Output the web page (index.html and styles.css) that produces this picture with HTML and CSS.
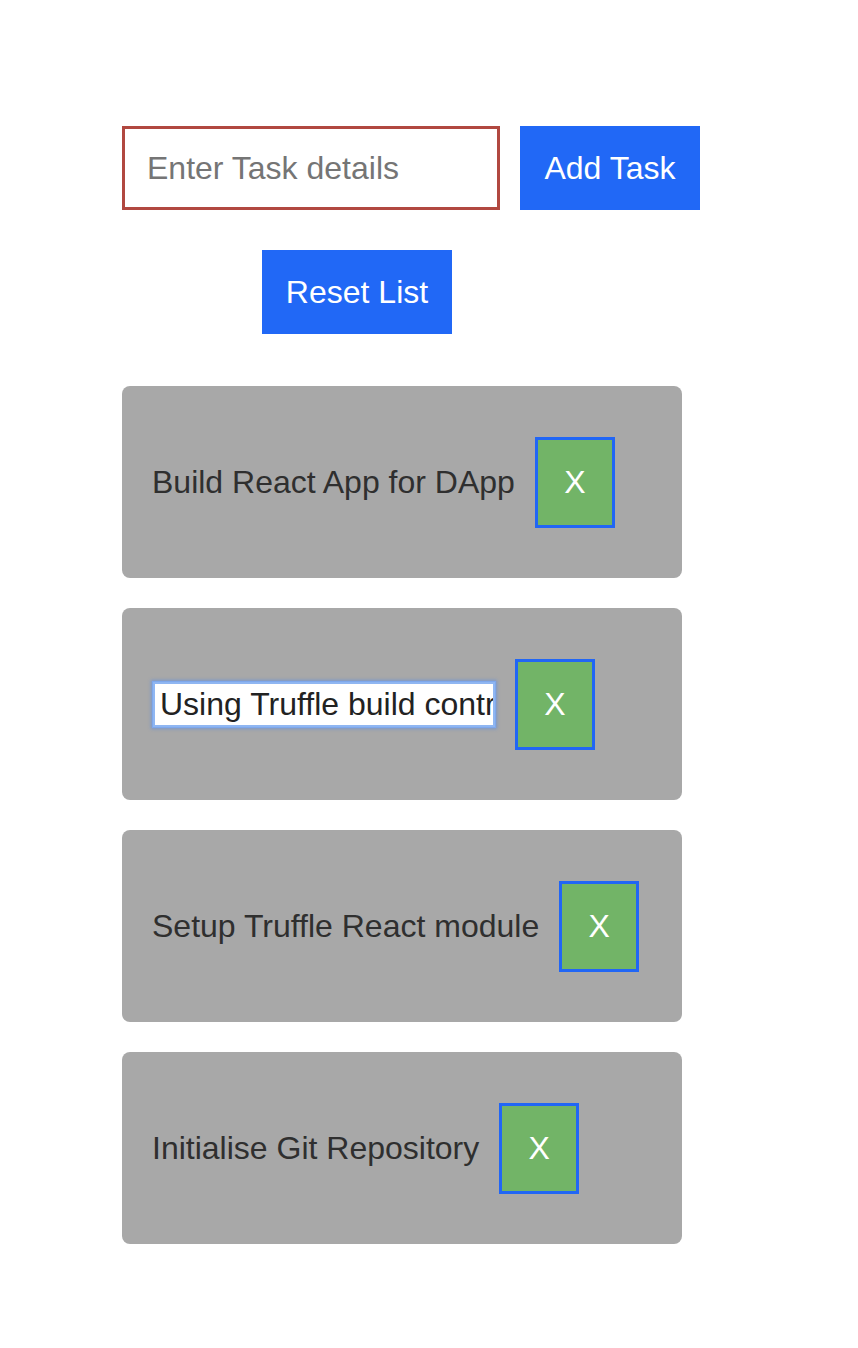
FILE: index.html
```html
<!DOCTYPE html>
<html lang="en">
<head>
<meta charset="utf-8">
<title>Todo DApp</title>
<link rel="stylesheet" href="styles.css">
</head>
<body>
<main class="app">
  <div class="add-row">
    <input class="task-input" type="text" placeholder="Enter Task details">
    <button class="btn btn-add">Add Task</button>
  </div>
  <div class="reset-row">
    <button class="btn btn-reset">Reset List</button>
  </div>
  <ul class="task-list">
    <li class="task-card">
      <span class="task-text">Build React App for DApp</span>
      <button class="btn-x">X</button>
    </li>
    <li class="task-card">
      <input class="task-edit" type="text" value="Using Truffle build contracts">
      <button class="btn-x">X</button>
    </li>
    <li class="task-card">
      <span class="task-text">Setup Truffle React module</span>
      <button class="btn-x">X</button>
    </li>
    <li class="task-card">
      <span class="task-text">Initialise Git Repository</span>
      <button class="btn-x">X</button>
    </li>
  </ul>
</main>
</body>
</html>
```
FILE: styles.css
```css
html, body {
  margin: 0;
  padding: 0;
  background: #ffffff;
}

body {
  font-family: "Liberation Sans", Arial, Helvetica, sans-serif;
}

.app {
  padding: 126px 0 0 122px;
}

.add-row {
  display: flex;
  gap: 20px;
  align-items: stretch;
}

.task-input {
  box-sizing: border-box;
  width: 378px;
  height: 84px;
  margin: 0;
  border: 3px solid #b14840;
  padding: 0 0 0 22px;
  font-family: inherit;
  font-size: 32px;
  color: #333;
  background: #fff;
  outline: none;
}

.task-input::placeholder {
  color: #757575;
}

.btn {
  box-sizing: border-box;
  height: 84px;
  margin: 0;
  border: none;
  background: #2168f6;
  color: #ffffff;
  font-family: inherit;
  font-size: 32px;
  padding: 0;
  cursor: pointer;
}

.btn-add {
  width: 180px;
}

.reset-row {
  margin-top: 40px;
  padding-left: 140px;
}

.btn-reset {
  width: 190px;
}

.task-list {
  list-style: none;
  margin: 52px 0 0 0;
  padding: 0;
  display: flex;
  flex-direction: column;
  gap: 30px;
}

.task-card {
  box-sizing: border-box;
  width: 560px;
  height: 192px;
  background: #a8a8a8;
  border-radius: 8px;
  padding-left: 30px;
  display: flex;
  align-items: center;
  gap: 20px;
}

.task-text {
  font-size: 32px;
  color: #2f2f2f;
}

.task-edit {
  box-sizing: border-box;
  width: 342px;
  height: 45px;
  margin: 0 0 0 1px;
  border: 2px solid #8fb6f2;
  box-shadow: 0 0 0 1px #7ea8ec, 0 0 3px 2px rgba(90, 140, 230, 0.6);
  padding: 0 0 0 5px;
  font-family: inherit;
  font-size: 32px;
  color: #222222;
  background: #ffffff;
  outline: none;
}

.btn-x {
  box-sizing: border-box;
  width: 80px;
  height: 91px;
  margin: 0;
  border: 3px solid #2166f5;
  background: #72b467;
  color: #ffffff;
  font-family: inherit;
  font-size: 32px;
  padding: 0;
  cursor: pointer;
}
```
